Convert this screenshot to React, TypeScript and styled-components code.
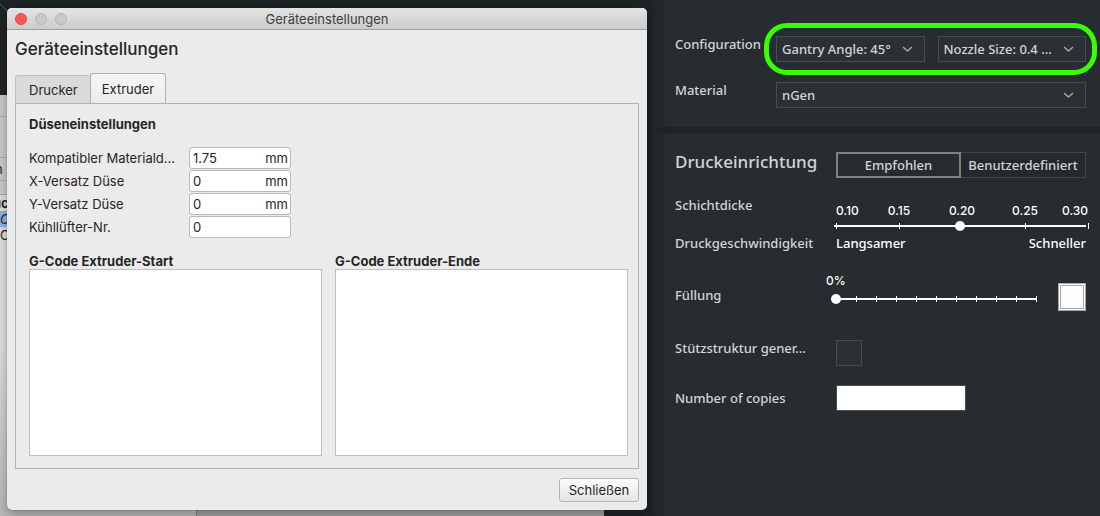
import React from 'react';
import styled, { createGlobalStyle } from 'styled-components';

const ui = '"Inter", "Liberation Sans", sans-serif';
const humanist = '"Noto Sans", "Open Sans", sans-serif';

const GlobalStyle = createGlobalStyle`
  *, *::before, *::after { box-sizing: border-box; }
  body { margin: 0; background: #1e2326; }
  button, input, select, textarea { font: inherit; color: inherit; margin: 0; }
`;

const Page = styled.div`
  display: grid;
  grid-template-columns: minmax(0, 1fr) 447px;
  min-height: 100vh;
  background: #1e2326;
`;

/* ---------- desktop with the settings dialog ---------- */

const Desktop = styled.main`
  display: grid;
  overflow: hidden;
  font: 13px/16px ${ui};
  color: #262626;
`;

const Viewport = styled.svg`
  grid-area: 1 / 1;
  width: 8px;
  height: 12px;
`;

const BackWindow = styled.div`
  grid-area: 1 / 1;
  display: grid;
  grid-template-columns: 197px minmax(0, 1fr);
  margin: 95px 49px 0 0;
  background: #a1a1a1;
`;

const BackList = styled.div`
  display: flex;
  flex-direction: column;
  border-right: 1px solid #858585;
  background: linear-gradient(#dedede 60%, #b8b8b8);
`;

const BackBar = styled.div<{ $h: number }>`
  height: ${(p) => p.$h}px;
  line-height: ${(p) => p.$h}px;
  border-bottom: 1px solid #a8a8a8;
  background: #cacaca;
  text-indent: -5px;
`;

const BackItem = styled.div<{ $selected?: boolean; $bold?: boolean; $italic?: boolean }>`
  height: 16px;
  background: ${(p) => (p.$selected ? '#8fb2e2' : 'transparent')};
  font-weight: ${(p) => (p.$bold ? 700 : 400)};
  font-style: ${(p) => (p.$italic ? 'italic' : 'normal')};
  text-indent: ${(p) => (p.$bold ? -7 : 0)}px;
`;

const Dialog = styled.section`
  grid-area: 1 / 1;
  z-index: 1;
  display: flex;
  flex-direction: column;
  margin: 8px 6px 6px 7px;
  border-radius: 5px;
  background: #ebebeb;
  box-shadow: 0 0 1px rgba(0, 0, 0, 0.6), 0 4px 12px rgba(0, 0, 0, 0.3);
  overflow: hidden;
`;

const TitleBar = styled.header`
  display: grid;
  grid-template-columns: 60px 1fr 60px;
  align-items: center;
  height: 22px;
  padding: 0 8px;
  border-bottom: 1px solid #a0a0a0;
  background: linear-gradient(#e4e4e4, #cbcbcb);
  color: #404040;
  text-align: center;
`;

const Lights = styled.div`
  display: flex;
  gap: 8px;
`;

const Light = styled.button<{ $active?: boolean }>`
  width: 12px;
  height: 12px;
  padding: 0;
  border: 1px solid ${(p) => (p.$active ? '#de4643' : '#b4b4b4')};
  border-radius: 50%;
  background: ${(p) => (p.$active ? '#fc5753' : '#c9c9c9')};
`;

const DialogBody = styled.div`
  flex: 1;
  display: flex;
  flex-direction: column;
  padding: 8px;
`;

const Heading = styled.h1`
  margin: 0;
  font-size: 17px;
  line-height: 22px;
  font-weight: 500;
`;

const Tabs = styled.div`
  display: flex;
  align-items: flex-end;
  margin-top: 13px;
`;

const Tab = styled.button<{ $active?: boolean }>`
  height: ${(p) => (p.$active ? 31 : 28)}px;
  margin-bottom: ${(p) => (p.$active ? -1 : 0)}px;
  padding: ${(p) => (p.$active ? '0 11px' : '0 12px 0 13px')};
  border: 1px solid ${(p) => (p.$active ? '#b0b0b0' : '#c0c0c0')};
  border-bottom: 0;
  ${(p) => !p.$active && 'border-right: 0;'}
  border-radius: 3px 3px 0 0;
  background: ${(p) => (p.$active ? 'linear-gradient(#f6f6f6, #ebebeb)' : '#dadada')};
`;

const TabPanel = styled.div`
  flex: 1;
  display: flex;
  flex-direction: column;
  padding: 12px 10px 12px 13px;
  border: 1px solid #b3b3b3;
`;

const SectionTitle = styled.h2`
  margin: 0 0 15px;
  font-size: 13px;
  line-height: 16px;
  font-weight: 700;
`;

const Fields = styled.div`
  display: grid;
  grid-template-columns: 160px 102px;
  row-gap: 1px;
  align-items: center;
`;

const FieldBox = styled.div`
  display: flex;
  align-items: center;
  height: 22px;
  padding: 0 2px 0 3px;
  border: 1px solid #b8b8b8;
  border-radius: 3px;
  background: #fff;
`;

const FieldInput = styled.input`
  flex: 1;
  min-width: 0;
  padding: 0;
  border: 0;
  background: none;
  outline: none;
`;

const Editors = styled.div`
  flex: 1;
  display: grid;
  grid-template-columns: 1fr 1fr;
  column-gap: 13px;
  margin-top: 15px;
`;

const Editor = styled.div`
  display: flex;
  flex-direction: column;
`;

const EditorLabel = styled.label`
  font-weight: 700;
`;

const EditorArea = styled.textarea`
  flex: 1;
  width: 100%;
  border: 1px solid #c0c0c0;
  background: #fff;
  resize: none;
  outline: none;
`;

const DialogFooter = styled.footer`
  display: flex;
  justify-content: flex-end;
  margin-top: 9px;
`;

const CloseButton = styled.button`
  min-width: 80px;
  height: 24px;
  padding: 0 8px;
  border: 1px solid #b5b5b5;
  border-radius: 3px;
  background: linear-gradient(#fdfdfd, #e4e4e4);
`;

/* ---------- print setup sidebar ---------- */

const Sidebar = styled.aside`
  display: flex;
  flex-direction: column;
  gap: 6px;
  font: 500 13px/16px ${humanist};
  color: #d3d4d5;
`;

const Panel = styled.section<{ $grow?: boolean }>`
  flex: ${(p) => (p.$grow ? 1 : 'none')};
  display: flex;
  flex-direction: column;
  padding: ${(p) => (p.$grow ? '19px 14px 19px 22px' : '36px 14px 19px 22px')};
  background: linear-gradient(90deg, #222629, #272c30 20px);
`;

const Row = styled.div<{ $label: number; $top?: number; $align?: string }>`
  display: grid;
  grid-template-columns: ${(p) => p.$label}px minmax(0, 1fr);
  align-items: ${(p) => p.$align || 'start'};
  margin-top: ${(p) => p.$top || 0}px;
`;

const Highlighted = styled.div`
  position: relative;
  display: grid;
  grid-template-columns: 1fr 1fr;
  column-gap: 13px;

  &::after {
    content: '';
    position: absolute;
    inset: -13px -11px -13px -12px;
    border: 5px solid #37ff00;
    border-radius: 23px;
    pointer-events: none;
  }
`;

const SelectWrap = styled.div`
  display: grid;
  align-items: center;
`;

const Select = styled.select`
  grid-area: 1 / 1;
  appearance: none;
  width: 100%;
  height: 26px;
  padding: 0 2px 0 5px;
  border: 1px solid #484c50;
  border-radius: 0;
  background: #2b3034;
  outline: none;
`;

const Chevron = styled.svg`
  grid-area: 1 / 1;
  justify-self: end;
  margin-right: 12px;
  pointer-events: none;
`;

const SetupTitle = styled.h2`
  margin: 0;
  font-size: 17px;
  line-height: 20px;
  font-weight: 500;
`;

const Toggle = styled.div`
  display: grid;
  grid-template-columns: 1fr 1fr;
`;

const ToggleButton = styled.button<{ $active?: boolean }>`
  height: 26px;
  padding: 0;
  border: ${(p) => (p.$active ? '2px solid #7d8183' : '1px solid #43474a')};
  ${(p) => !p.$active && 'border-left: 0;'}
  background: ${(p) => (p.$active ? '#272c30' : '#25292d')};
`;

const LayerLabels = styled.div`
  display: grid;
  grid-template-columns: 1fr 2fr 2fr 2fr 1fr;
  margin: 6px -2px 0 0;
  font: 500 12px/16px ${ui};
  color: #fff;
  text-align: center;

  & > :first-child { justify-self: start; }
  & > :last-child { justify-self: end; }
`;

const SliderBox = styled.div`
  display: grid;
  align-items: center;
  height: 14px;
`;

const Range = styled.input<{ $wide?: boolean }>`
  grid-area: 1 / 1;
  appearance: none;
  height: 10px;
  margin: 0 -5px 0 ${(p) => (p.$wide ? -7 : -5)}px;
  background: linear-gradient(#fff, #fff) center / calc(100% - 10px) 2px no-repeat;
  outline: none;

  &::-webkit-slider-thumb {
    appearance: none;
    width: 10px;
    height: 10px;
    border-radius: 50%;
    background: #fff;
  }
`;

const Ticks = styled.div<{ $wide?: boolean }>`
  grid-area: 1 / 1;
  display: flex;
  justify-content: space-between;
  height: 6px;
  margin-right: ${(p) => (p.$wide ? -3 : 0)}px;
  pointer-events: none;

  & > span { width: 1px; background: #fff; }
`;

const Speed = styled.div`
  display: flex;
  justify-content: space-between;
  color: #fff;
`;

const InfillLabel = styled.label`
  padding-bottom: 8px;
`;

const Infill = styled.div`
  display: grid;
  grid-template-columns: minmax(0, 1fr) 28px;
  column-gap: 21px;
  align-items: end;
`;

const InfillSlider = styled.div`
  padding-bottom: 5px;
`;

const InfillValue = styled.output`
  display: block;
  width: 20px;
  margin: 0 0 3px -10px;
  font: 500 12px/16px ${ui};
  color: #fff;
`;

const InfillButton = styled.button`
  width: 28px;
  height: 28px;
  padding: 0;
  border: 3px double #a9abac;
  background: #fff;
`;

const CheckBox = styled.input`
  appearance: none;
  width: 26px;
  height: 26px;
  border: 1px solid #484c50;
  background: #2b3034;
`;

const Copies = styled.input`
  width: 130px;
  height: 26px;
  border: 1px solid #484c50;
  background: #fff;
  color: #262626;
  outline: none;
`;

const nozzleFields = [
  { id: 'diameter', label: 'Kompatibler Materiald...', value: '1.75', unit: 'mm' },
  { id: 'offset-x', label: 'X-Versatz Düse', value: '0', unit: 'mm' },
  { id: 'offset-y', label: 'Y-Versatz Düse', value: '0', unit: 'mm' },
  { id: 'fan', label: 'Kühllüfter-Nr.', value: '0' },
];

const layerHeights = ['0.10', '0.15', '0.20', '0.25', '0.30'];

function Dropdown({ id, label, value }: { id: string; label?: string; value: string }) {
  return (
    <SelectWrap>
      <Select id={id} aria-label={label}>
        <option>{value}</option>
      </Select>
      <Chevron width="11" height="7" viewBox="0 0 11 7" fill="none" stroke="#a3a6a8" strokeWidth="1.5">
        <path d="M1 1 L5.5 5 L10 1" />
      </Chevron>
    </SelectWrap>
  );
}

function Marks({ count, wide }: { count: number; wide?: boolean }) {
  return (
    <Ticks $wide={wide}>
      {Array.from({ length: count }, (_, i) => (
        <span key={i} />
      ))}
    </Ticks>
  );
}

export default function App() {
  return (
    <Page>
      <GlobalStyle />
      <Desktop>
        <Viewport viewBox="0 0 8 12" fill="none" stroke="#1c6f8f">
          <path d="M0 4 L7 11" />
        </Viewport>
        <BackWindow>
          <BackList>
            <BackBar $h={22} />
            <BackBar $h={41} />
            <BackBar $h={23}>n</BackBar>
            <BackBar $h={14} />
            <BackItem $bold>uc</BackItem>
            <BackItem $selected $italic>C</BackItem>
            <BackItem>C</BackItem>
          </BackList>
        </BackWindow>
        <Dialog>
          <TitleBar>
            <Lights>
              <Light $active />
              <Light />
              <Light />
            </Lights>
            <span>Geräteeinstellungen</span>
          </TitleBar>
          <DialogBody>
            <Heading>Geräteeinstellungen</Heading>
            <Tabs role="tablist">
              <Tab role="tab">Drucker</Tab>
              <Tab role="tab" aria-selected $active>
                Extruder
              </Tab>
            </Tabs>
            <TabPanel role="tabpanel">
              <SectionTitle>Düseneinstellungen</SectionTitle>
              <Fields>
                {nozzleFields.map((f) => (
                  <React.Fragment key={f.id}>
                    <label htmlFor={f.id}>{f.label}</label>
                    <FieldBox>
                      <FieldInput id={f.id} defaultValue={f.value} />
                      {f.unit && <span>{f.unit}</span>}
                    </FieldBox>
                  </React.Fragment>
                ))}
              </Fields>
              <Editors>
                <Editor>
                  <EditorLabel htmlFor="gcode-start">G-Code Extruder-Start</EditorLabel>
                  <EditorArea id="gcode-start" />
                </Editor>
                <Editor>
                  <EditorLabel htmlFor="gcode-end">G-Code Extruder-Ende</EditorLabel>
                  <EditorArea id="gcode-end" />
                </Editor>
              </Editors>
            </TabPanel>
            <DialogFooter>
              <CloseButton>Schließen</CloseButton>
            </DialogFooter>
          </DialogBody>
        </Dialog>
      </Desktop>
      <Sidebar>
        <Panel>
          <Row $label={101}>
            <label htmlFor="gantry">Configuration</label>
            <Highlighted>
              <Dropdown id="gantry" value="Gantry Angle: 45°" />
              <Dropdown id="nozzle" label="Nozzle Size" value="Nozzle Size: 0.4 ..." />
            </Highlighted>
          </Row>
          <Row $label={101} $top={20}>
            <label htmlFor="material">Material</label>
            <Dropdown id="material" value="nGen" />
          </Row>
        </Panel>
        <Panel $grow>
          <Row $label={161}>
            <SetupTitle>Druckeinrichtung</SetupTitle>
            <Toggle>
              <ToggleButton $active>Empfohlen</ToggleButton>
              <ToggleButton>Benutzerdefiniert</ToggleButton>
            </Toggle>
          </Row>
          <Row $label={161} $top={19}>
            <label htmlFor="layer">Schichtdicke</label>
            <div>
              <LayerLabels>
                {layerHeights.map((h) => (
                  <span key={h}>{h}</span>
                ))}
              </LayerLabels>
              <SliderBox>
                <Range id="layer" type="range" min={0} max={4} defaultValue={2} $wide />
                <Marks count={5} wide />
              </SliderBox>
            </div>
          </Row>
          <Row $label={161} $top={2}>
            <span>Druckgeschwindigkeit</span>
            <Speed>
              <span>Langsamer</span>
              <span>Schneller</span>
            </Speed>
          </Row>
          <Row $label={161} $top={22} $align="end">
            <InfillLabel htmlFor="infill">Füllung</InfillLabel>
            <Infill>
              <InfillSlider>
                <InfillValue>0%</InfillValue>
                <SliderBox>
                  <Range id="infill" type="range" min={0} max={100} defaultValue={0} />
                  <Marks count={11} />
                </SliderBox>
              </InfillSlider>
              <InfillButton aria-label="Füllung" />
            </Infill>
          </Row>
          <Row $label={161} $top={29}>
            <label htmlFor="support">Stützstruktur gener...</label>
            <CheckBox id="support" type="checkbox" />
          </Row>
          <Row $label={161} $top={19} $align="center">
            <label htmlFor="copies">Number of copies</label>
            <Copies id="copies" type="text" />
          </Row>
        </Panel>
      </Sidebar>
    </Page>
  );
}
